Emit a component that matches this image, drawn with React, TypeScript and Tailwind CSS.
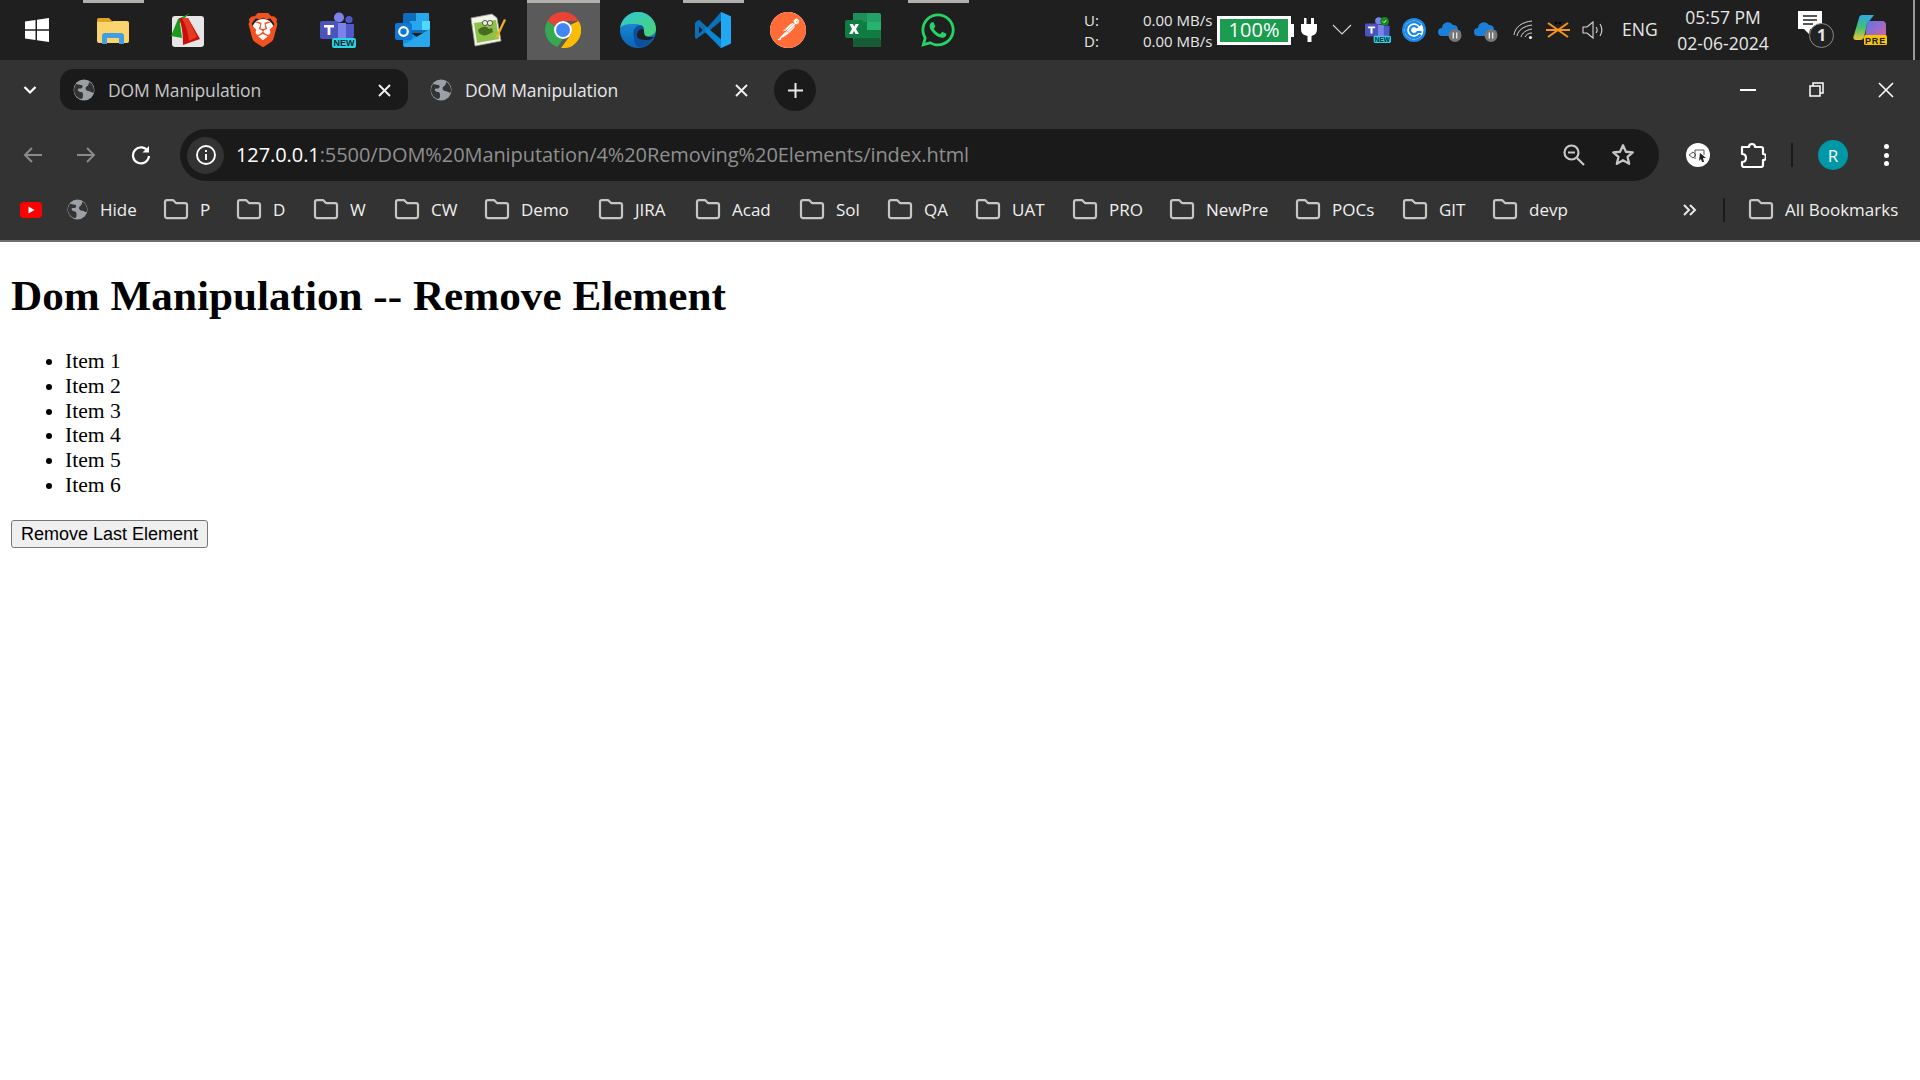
import React from "react";
import { SiBrave, SiPostman } from "react-icons/si";
import { FaWhatsapp } from "react-icons/fa";

const ui = "font-['Open_Sans','Noto_Sans',sans-serif]";

function Globe({ c = "#9aa0a6", s = 22 }: { c?: string; s?: number }) {
  return (
    <svg width={s} height={s} viewBox="0 0 22 22">
      <circle cx="11" cy="11" r="10.5" fill={c} />
      <path d="M3 5c2 0 3 1 5 1s2 2 1 3-3 0-4 1 1 3 3 3 2 2 2 4-1 3-2 3C4 19 1 15 1 11c0-2 1-4 2-6zM13 8c2-1 3-3 3-5 3 1 5 5 5 8 0 1 0 2-1 3-2-1-3-2-5-2s-3-3-2-4z" fill="#333" />
    </svg>
  );
}

function Folder({ s = 26 }: { s?: number }) {
  return (
    <svg width={s} height={s * 0.85} viewBox="0 0 26 22" fill="none" stroke="#c4c7c5" strokeWidth="2.2" strokeLinejoin="round">
      <path d="M2 4a2 2 0 0 1 2-2h6l3 3h9a2 2 0 0 1 2 2v11a2 2 0 0 1-2 2H4a2 2 0 0 1-2-2z" />
    </svg>
  );
}

function Cell({ indicator, active, children }: { indicator?: boolean; active?: boolean; children: React.ReactNode }) {
  return (
    <div className="relative w-[75px] h-[60px] flex items-center justify-center">
      {active && <div className="absolute left-[2px] right-0 top-0 bottom-0 bg-[#5a5a5a]" />}
      {(indicator || active) && <div className={`absolute top-0 h-[3px] bg-[#b3b1ae] ${active ? "left-[2px] right-0" : "left-[8px] right-[6px]"}`} />}
      <div className="relative flex">{children}</div>
    </div>
  );
}

const Win = () => (
  <svg className="mr-[2px]" width="26" height="26" viewBox="0 0 26 26" fill="#fff">
    <path d="M1 4.5 11.5 3v9.3H1zM13 2.800 25 1v11.300H13zM1 13.700h10.500V23L1 21.600zM13 13.700h12V25l-12-1.800z" />
  </svg>
);
const Explorer = () => (
  <svg width="32" height="27" viewBox="0 0 32 27">
    <path d="M0 3a2 2 0 0 1 2-2h10l3 3-1 3H0z" fill="#e0a526" />
    <path d="M0 5h14l2-1h14a2 2 0 0 1 2 2v18a2 2 0 0 1-2 2H2a2 2 0 0 1-2-2z" fill="#fbd46d" />
    <path d="M5 19a3 3 0 0 1 3-3h16a3 3 0 0 1 3 3v8h-5v-6H10v6H5z" fill="#3f9fe0" />
  </svg>
);
const FastStone = () => (
  <svg width="34" height="36" viewBox="0 -4 34 36">
    <rect x="1" y="0" width="32" height="31" rx="3" fill="#e6e6e6" />
    <path d="M19-3 7 3 0 20l11 2L9 7c3-4 7-7 10-10z" fill="#1c9a1e" />
    <path d="M8 2h9l12 21-17 6C12 18 11 10 8 2z" fill="#c90f0a" />
    <path d="M11 2h6l9 19-8 4C17 15 14 8 11 2z" fill="#e63a22" />
  </svg>
);
const BraveIcon = () => (
  <div className="relative w-[34px] h-[34px]">
    <div className="absolute left-[6px] top-[6px] w-[22px] h-[22px] rounded-full bg-white" />
    <SiBrave size={34} color="#f1521f" className="absolute inset-0" />
  </div>
);
const Teams = ({ s = 36, badge }: { s?: number; badge?: boolean }) => (
  <svg width={s} height={s} viewBox="0 0 36 36">
    <circle cx="19" cy="5.500" r="5" fill="#7b83eb" />
    <circle cx="29" cy="7.500" r="3.600" fill="#5059c9" />
    <path d="M22 12h12v12a4 4 0 0 1-4 3h-8z" fill="#5059c9" />
    <path d="M12 11h14v15a6 6 0 0 1-7 6 7 7 0 0 1-7-6z" fill="#7b83eb" />
    <rect x="0" y="9" width="18" height="18" rx="2" fill="#4b53bc" />
    <path d="M4 13h10v2.500h-3.600V23H7.600v-7.500H4z" fill="#fff" />
    <rect x="12" y="26" width="24" height="10" rx="2" fill="#28d5e0" />
    <text x="24" y="34" textAnchor="middle" fontSize="9" fontWeight="800" fill="#123" fontFamily="'Liberation Sans',sans-serif">NEW</text>
    {badge && <circle cx="27" cy="6" r="6" fill="#138a1e" />}
    {badge && <path d="M24.500 6l2 2 3-4" fill="none" stroke="#fff" strokeWidth="1.200" />}
  </svg>
);
const Outlook = () => (
  <svg width="36" height="34" viewBox="0 0 36 34">
    <rect x="8" y="0" width="26" height="20" rx="2" fill="#0f6cbd" />
    <rect x="21" y="0" width="13" height="9" fill="#28a8ea" />
    <rect x="15" y="8" width="12" height="9" fill="#28a8ea" />
    <rect x="27" y="8" width="8" height="9" fill="#50d9ff" />
    <path d="M8 15l14 9 13-8v16a2 2 0 0 1-2 2H10a2 2 0 0 1-2-2z" fill="#1490df" />
    <path d="M8 32l27-16v16a2 2 0 0 1-2 2H10z" fill="#28a8ea" />
    <rect x="0" y="10" width="17" height="17" rx="2" fill="#0f78d4" />
    <circle cx="8.500" cy="18.500" r="4.300" fill="none" stroke="#fff" strokeWidth="2.200" />
  </svg>
);
const Notepad = () => (
  <svg width="36" height="36" viewBox="0 0 36 36">
    <path d="M1 6 22 2l5 4 4 23-26 5z" fill="#f2f4e8" stroke="#999" strokeWidth="0.800" />
    <path d="M4 11 26 8l3 19-22 4z" fill="#8fc04a" />
    <path d="M8 18c4-4 9-4 11-1l3-1 1 4-4 2c-3 2-7 2-10-1z" fill="#4a6b22" />
    <circle cx="15" cy="11" r="2.600" fill="#e8eed7" stroke="#333" strokeWidth="0.800" />
    <circle cx="20" cy="11" r="2.600" fill="#e8eed7" stroke="#333" strokeWidth="0.800" />
    <path d="M26 24 34 7l2 1-8 17-3 2z" fill="#f1b220" />
  </svg>
);
const Chrome = () => (
  <svg width="36" height="36" viewBox="0 0 36 36">
    <path d="M18 0a18 18 0 0 1 15.600 9H18a9 9 0 0 0-8 5L2.400 9A18 18 0 0 1 18 0z" fill="#ea4335" />
    <path d="M2.400 9 10 14a9 9 0 0 0 8 13l-5.500 8A18 18 0 0 1 2.400 9z" fill="#34a853" />
    <path d="M33.600 9A18 18 0 0 1 16 36l8-11a9 9 0 0 0 1-12z" fill="#fbbc04" />
    <circle cx="18" cy="18" r="9" fill="#fff" />
    <circle cx="18" cy="18" r="7" fill="#4285f4" />
  </svg>
);
const Edge = () => (
  <svg width="36" height="36" viewBox="0 0 36 36">
    <defs>
      <linearGradient id="eg" x1="0" y1="0" x2="1" y2="1"><stop offset="0" stopColor="#2fc7d8" /><stop offset="1" stopColor="#4bd46f" /></linearGradient>
      <linearGradient id="eb" x1="0" y1="0" x2="0" y2="1"><stop offset="0" stopColor="#1b9ade" /><stop offset="1" stopColor="#0c62b4" /></linearGradient>
    </defs>
    <circle cx="18" cy="18" r="18" fill="url(#eb)" />
    <path d="M0 16C2 6 10 0 18 0c10 0 18 8 18 17 0 5-5 8-10 7-3 0-2-3-2-5 0-3-3-7-8-7C9 12 3 12 0 16z" fill="url(#eg)" />
    <path d="M14 25c-2-6 1-11 6-12 3 0 4 3 4 5 0 3 0 6 4 7 3 1 5 0 6-1-3 7-8 11-14 11-4 0-6-4-6-10z" fill="#0b4f9e" />
    <path d="M17 24c0-4 2-7 5-7 2 0 2 2 2 3 0 4 2 5 5 5h5c-2 2-4 3-7 3-5 0-10-1-10-4z" fill="#1f1f1f" />
  </svg>
);
const VSCode = () => (
  <svg width="36" height="36" viewBox="0 0 36 36">
    <path d="M26 0 36 4.500V31.500L26 36 11 20 1 27 0 25V11l1-1 10 7z" fill="#0a72bc" />
    <path d="M1 10 4 8l22 20v8L11 21z" fill="#0a87d4" />
    <path d="M26 0 36 4.500V31.500L26 36z" fill="#22a7f2" />
    <path d="M26 9 15 18l11 9z" fill="#1f1f1f" />
    <path d="M1 10l3-2 7 6-1 6-9 7-1-2 6-7z" fill="#0e6fb1" />
    <path d="M4 14.500 7.500 18 4 21.500z" fill="#1f1f1f" />
  </svg>
);
const Postman = () => (
  <div className="relative w-[36px] h-[36px] rounded-full bg-[#fff]">
    <SiPostman size={36} color="#ff6c37" className="absolute inset-0" />
  </div>
);
const Excel = () => (
  <svg width="36" height="34" viewBox="0 0 36 34">
    <rect x="8" y="0" width="28" height="34" rx="2" fill="#21a366" />
    <rect x="8" y="0" width="14" height="9" fill="#1d8f5a" />
    <rect x="8" y="9" width="14" height="8" fill="#107c41" />
    <rect x="22" y="9" width="14" height="8" fill="#33c481" opacity="0.450" />
    <rect x="8" y="17" width="28" height="8" fill="#107c41" />
    <rect x="8" y="25" width="28" height="9" rx="2" fill="#185c37" />
    <rect x="0" y="7" width="18" height="18" rx="2" fill="#107c41" />
    <path d="M4.500 11H8l1.200 2.800L10.500 11H14l-3 5 3 5h-3.500L9 18l-1.500 3H4l3-5z" fill="#fff" />
  </svg>
);
const Cloud = () => (
  <svg width="24" height="24" viewBox="0 0 24 24">
    <path d="M4 18a4 4 0 0 1 0-8 6 6 0 0 1 11-3 4.500 4.500 0 0 1 5 5 3 3 0 0 1 0 6z" fill="#1a7fd8" />
    <circle cx="17" cy="17.500" r="6.500" fill="#777" />
    <path d="M15.300 14.500v6M18.700 14.500v6" stroke="#eee" strokeWidth="1.300" />
  </svg>
);

function Tab({ active, title }: { active?: boolean; title: string }) {
  return (
    <div className={`h-[41px] rounded-[14px] flex items-center relative ${active ? "w-[348px] bg-[#1a1a1a] text-[#c7c7c7]" : "w-[357px] text-[#e8e8e8]"}`}>
      <div className="ml-[13px] flex"><Globe /></div>
      <span className="ml-[13px] pt-[2px] text-[17.500px] leading-none tracking-[-0.100px]">{title}</span>
      <svg className="absolute top-[15px] left-[318px]" width="13" height="13" viewBox="0 0 13 13" stroke="#f0f0f0" strokeWidth="1.900"><path d="M1 1l11 11M12 1 1 12" /></svg>
    </div>
  );
}

const bookmarks: [string, string][] = [
  ["P", "w-[73px]"], ["D", "w-[77px]"], ["W", "w-[81px]"], ["CW", "w-[90px]"], ["Demo", "w-[114px]"], ["JIRA", "w-[97px]"],
  ["Acad", "w-[104px]"], ["Sol", "w-[88px]"], ["QA", "w-[88px]"], ["UAT", "w-[97px]"], ["PRO", "w-[97px]"], ["NewPre", "w-[126px]"], ["POCs", "w-[107px]"], ["GIT", "w-[90px]"], ["devp", "w-[90px]"],
];

export default function App() {
  return (
    <div className={`w-[1920px] h-[1080px] overflow-hidden flex flex-col bg-white ${ui}`}>
      {/* Windows taskbar */}
      <div className="h-[60px] bg-[#1f1f1f] flex items-center text-[#e8e8e8] shrink-0 [&>*]:shrink-0">
        <Cell><Win /></Cell>
        <Cell indicator><Explorer /></Cell>
        <Cell><FastStone /></Cell>
        <Cell><BraveIcon /></Cell>
        <Cell><Teams /></Cell>
        <Cell><Outlook /></Cell>
        <Cell><Notepad /></Cell>
        <Cell active><Chrome /></Cell>
        <Cell><Edge /></Cell>
        <Cell indicator><VSCode /></Cell>
        <Cell><Postman /></Cell>
        <Cell><Excel /></Cell>
        <Cell indicator><FaWhatsapp size={38} color="#25d366" /></Cell>
        <div className="ml-[109px] w-[59px] flex flex-col gap-[3px] text-[15px] leading-[18px]"><span>U:</span><span>D:</span></div>
        <div className="w-[73px] flex flex-col gap-[3px] text-[15px] leading-[18px] whitespace-nowrap"><span>0.00 MB/s</span><span>0.00 MB/s</span></div>
        <div className="ml-[1px] flex items-center">
          <div className="w-[74px] h-[29px] border-[3px] border-white bg-[#1b9c4f] flex items-center justify-center text-[20px] leading-none text-white">100%</div>
          <div className="w-[3px] h-[13px] bg-white" />
        </div>
        <svg className="ml-[7px]" width="16" height="24" viewBox="0 0 16 24" fill="#fff"><path d="M3 0h2.500v6H10V0h3v6h3v5c0 4-2 6-5.500 7v6h-4v-6C2 17 0 15 0 11V6h3z" /></svg>
        <svg className="ml-[15px]" width="20" height="12" viewBox="0 0 20 12" fill="none" stroke="#d8d8d8" strokeWidth="1.100"><path d="M1 1l9 9 9-9" /></svg>
        <div className="ml-[13px] flex"><Teams s={26} badge /></div>
        <svg className="ml-[11px]" width="24" height="24" viewBox="0 0 24 24" fill="none"><circle cx="12" cy="12" r="12" fill="#1e88e5" /><circle cx="12" cy="12" r="9.500" fill="#fff" /><path d="M18.500 7.500A8 8 0 1 0 18.500 16.500" stroke="#1e88e5" strokeWidth="2.600" /><path d="M15.500 10a4 4 0 1 0 0 4h4" stroke="#1e88e5" strokeWidth="2.200" /></svg>
        <div className="ml-[12px] flex"><Cloud /></div>
        <div className="ml-[12px] flex"><Cloud /></div>
        <svg className="ml-[15px]" width="20" height="20" viewBox="0 0 20 20" fill="none" stroke="#d6d6d6" strokeWidth="1"><path d="M1 15C2 7 9 2 19 1M4 16c1-6 7-10 15-11M8 17c1-4 5-7 11-8M12 17c1-2 3-4 7-4" /><circle cx="17.500" cy="17.500" r="1.600" fill="#eee" stroke="none" /></svg>
        <svg className="ml-[13px]" width="24" height="18" viewBox="0 0 24 18" fill="none"><path d="M0 9h24M2 2l10 7-10 7M22 2 12 9l10 7" stroke="#f7941d" strokeWidth="2" /><circle cx="10" cy="2" r="1.300" fill="#000" /><circle cx="14" cy="2" r="1.300" fill="#000" /></svg>
        <svg className="ml-[12px]" width="23" height="20" viewBox="0 0 23 20" fill="none" stroke="#d8d8d8" strokeWidth="1.100"><path d="M1 7h4l6-5v16l-6-5H1zM14 7c1.500 2 1.500 4 0 6M18 4c2.500 4 2.500 8 0 12" /></svg>
        <span className="ml-[17px] w-[34px] text-[17.500px] leading-none whitespace-nowrap">ENG</span>
        <div className="ml-[20px] w-[94px] flex flex-col items-center gap-[6px] text-[17.500px] leading-[20px] whitespace-nowrap"><span>05:57 PM</span><span>02-06-2024</span></div>
        <div className="relative ml-[28px] w-[24px] h-[32px] mt-[7px]">
          <svg width="24" height="24" viewBox="0 0 24 24" className="absolute top-[-7px] left-0"><path d="M0 0h24v18H12l-1 5-5-5H0z" fill="#fff" /><path d="M5 5h14M5 9h14M5 13h10" stroke="#222" strokeWidth="1.400" /></svg>
          <div className="absolute left-[11px] top-[5px] w-[25px] h-[25px] rounded-full border-[1.500px] border-[#888] bg-[#222] flex items-center justify-center text-[16px] font-bold leading-none">1</div>
        </div>
        <svg className="ml-[31px]" width="34" height="32" viewBox="0 0 34 32">
          <defs>
            <linearGradient id="cp1" x1="0" y1="0" x2="0" y2="1"><stop offset="0" stopColor="#2fa9e8" /><stop offset="0.500" stopColor="#41c16d" /><stop offset="1" stopColor="#f2c53d" /></linearGradient>
            <linearGradient id="cp2" x1="0" y1="0" x2="1" y2="1"><stop offset="0" stopColor="#4e7bf0" /><stop offset="1" stopColor="#e35ba4" /></linearGradient>
          </defs>
          <path d="M9 1h12L14 10l-3 13c0 2-2 3-4 3H3c-3 0-3-3-2-5L6 4c0-2 2-3 3-3z" fill="url(#cp1)" />
          <path d="M14 7h15c3 0 4 2 4 4v9c0 3-2 5-5 5H12z" fill="url(#cp2)" />
          <rect x="11" y="21" width="23" height="10" rx="1.500" fill="#f6c400" />
          <text x="22.500" y="29.500" textAnchor="middle" fontSize="9" fontWeight="800" letterSpacing="0.800" fill="#1a1a1a" fontFamily="'Liberation Sans',sans-serif">PRE</text>
        </svg>
        <div className="ml-[26px] w-[2px] h-[60px] bg-[#9a9a9a]" />
      </div>

      {/* Chrome frame */}
      <div className="h-[69px] bg-[#333333] flex items-start pt-[9px] text-white shrink-0 [&>*]:shrink-0">
        <div className="w-[60px] h-[41px] flex items-center justify-center">
          <svg width="14" height="10" viewBox="0 0 14 10" fill="none" stroke="#fff" strokeWidth="2.200"><path d="M1.500 2 7 7.500 12.500 2" /></svg>
        </div>
        <Tab active title="DOM Manipulation" />
        <div className="ml-[9px]"><Tab title="DOM Manipulation" /></div>
        <div className="w-[42px] h-[42px] rounded-full bg-[#1a1a1a] flex items-center justify-center">
          <svg width="17" height="17" viewBox="0 0 17 17" stroke="#e8e8e8" strokeWidth="2"><path d="M8.500 1v15M1 8.500h15" /></svg>
        </div>
        <div className="ml-auto h-[41px] flex items-center">
          <div className="w-[16px] h-[2px] bg-white" />
          <svg className="ml-[53px]" width="15" height="15" viewBox="0 0 15 15" fill="none" stroke="#fff" strokeWidth="1.500"><rect x="1" y="4" width="10" height="10" /><path d="M4 4V1h10v10h-3" /></svg>
          <svg className="ml-[54px] mr-[26px]" width="16" height="16" viewBox="0 0 16 16" stroke="#fff" strokeWidth="1.600"><path d="M1 1l14 14M15 1 1 15" /></svg>
        </div>
      </div>

      <div className="h-[52px] bg-[#333333] flex items-center shrink-0 [&>*]:shrink-0">
        <svg className="ml-[23px]" width="20" height="18" viewBox="0 0 20 18" fill="none" stroke="#8a8a8a" strokeWidth="2"><path d="M19 9H2M9 2 2 9l7 7" /></svg>
        <svg className="ml-[33px]" width="20" height="18" viewBox="0 0 20 18" fill="none" stroke="#8a8a8a" strokeWidth="2"><path d="M1 9h17M11 2l7 7-7 7" /></svg>
        <svg className="ml-[35px]" width="20" height="20" viewBox="0 0 20 20" fill="none" stroke="#fff" strokeWidth="2.200"><path d="M17 6.500A8 8 0 1 0 18 11" /><path d="M18 1v6.500h-6.500" fill="#fff" strokeWidth="0" /></svg>
        <div className="ml-[29px] w-[1479px] h-[52px] rounded-full bg-[#1a1a1a] flex items-center">
          <div className="ml-[7px] w-[37px] h-[37px] rounded-full bg-[#333333] flex items-center justify-center">
            <svg width="22" height="22" viewBox="0 0 22 22" fill="none" stroke="#fff" strokeWidth="1.900"><circle cx="11" cy="11" r="9" /><path d="M11 10v6M11 6v2" /></svg>
          </div>
          <span className="ml-[12px] text-[20px] leading-none tracking-[-0.080px] text-[#8f8f8f] whitespace-nowrap"><span className="text-white">127.0.0.1</span>:5500/DOM%20Maniputation/4%20Removing%20Elements/index.html</span>
          <svg className="ml-auto" width="24" height="24" viewBox="0 0 24 24" fill="none" stroke="#c7c7c7" strokeWidth="2.200"><circle cx="9.500" cy="9.500" r="7" /><path d="M6 9.500h7M15 15l7 7" /></svg>
          <svg className="ml-[24px] mr-[23px]" width="26" height="26" viewBox="0 0 24 24" fill="none" stroke="#c7c7c7" strokeWidth="2.100" strokeLinejoin="round"><path d="M12 3l2.700 6 6.300.600-4.800 4.200 1.500 6.400-5.700-3.400-5.700 3.400 1.500-6.400L3 9.600 9.300 9z" /></svg>
        </div>
        <div className="ml-[27px] w-[24px] h-[24px] rounded-full bg-white flex items-center justify-center">
          <svg width="20" height="16" viewBox="0 0 20 16" fill="none" stroke="#555" strokeWidth="1"><path d="M1 8l4-3 3 3-3 3zM7 3h9v5M7 12V3" /><path d="M12 6l6 5-3 0 1 4-2 0-1-3-2 2z" fill="#222" stroke="none" /></svg>
        </div>
        <svg className="ml-[30px]" width="26" height="26" viewBox="0 0 26 26" fill="none" stroke="#fff" strokeWidth="2.200" strokeLinejoin="round"><path d="M2 5h7c0-4 6-4 6 0h6c1 0 2 1 2 2v5c4 0 4 6 0 6v5c0 1-1 2-2 2H4c-1 0-2-1-2-2v-3c3 0 4-2 4-4s-1-4-4-4z" /></svg>
        <div className="ml-[25px] w-[2px] h-[24px] bg-[#1a1a1a]" />
        <div className="ml-[25px] w-[30px] h-[30px] rounded-full bg-[#0097a7] flex items-center justify-center text-[17px] leading-none text-white">R</div>
        <div className="ml-[36px] flex flex-col gap-[3.500px]">
          <div className="w-[5px] h-[5px] rounded-full bg-white" /><div className="w-[5px] h-[5px] rounded-full bg-white" /><div className="w-[5px] h-[5px] rounded-full bg-white" />
        </div>
      </div>

      <div className="h-[59px] pb-[2px] bg-[#333333] flex items-center text-[#f0f0f0] text-[17px] leading-none shrink-0 [&>*]:shrink-0">
        <svg className="ml-[20px]" width="22" height="16" viewBox="0 0 22 16"><rect width="22" height="16" rx="4" fill="#f00" /><path d="M8.500 4.500v7l6-3.500z" fill="#fff" /></svg>
        <div className="ml-[25px] w-[96px] flex items-center gap-[12px]"><Globe s={21} /><span>Hide</span></div>
        {bookmarks.map(([n, w]) => (
          <div key={n} className={`${w} flex items-center gap-[11px]`}><Folder /><span>{n}</span></div>
        ))}
        <svg className="ml-[100px]" width="15" height="14" viewBox="0 0 15 14" fill="none" stroke="#e8e8e8" strokeWidth="2"><path d="M2 2l5 5-5 5M8 2l5 5-5 5" /></svg>
        <div className="ml-[26px] w-[2px] h-[24px] bg-[#1a1a1a]" />
        <div className="ml-[23px] flex items-center gap-[11px] whitespace-nowrap"><Folder /><span>All Bookmarks</span></div>
      </div>
      <div className="h-[2px] bg-[#6e6e6e] shrink-0" />

      {/* Page */}
      <main className="flex-1 pl-[11px] text-black font-['Liberation_Serif','Times_New_Roman',serif]">
        <h1 className="mt-[29px] text-[43.200px] leading-[50px] font-bold">Dom Manipulation -- Remove Element</h1>
        <ul className="mt-[28px] pl-[54px] list-disc text-[21.600px] leading-[24.800px]">
          {[1, 2, 3, 4, 5, 6].map((i) => <li key={i}>Item {i}</li>)}
        </ul>
        <button className="mt-[22.600px] w-[197px] h-[28px] bg-[#efefef] border border-[#767676] rounded-[3px] text-[18px] leading-none text-black font-['Liberation_Sans',Arial,sans-serif]">Remove Last Element</button>
      </main>
    </div>
  );
}
